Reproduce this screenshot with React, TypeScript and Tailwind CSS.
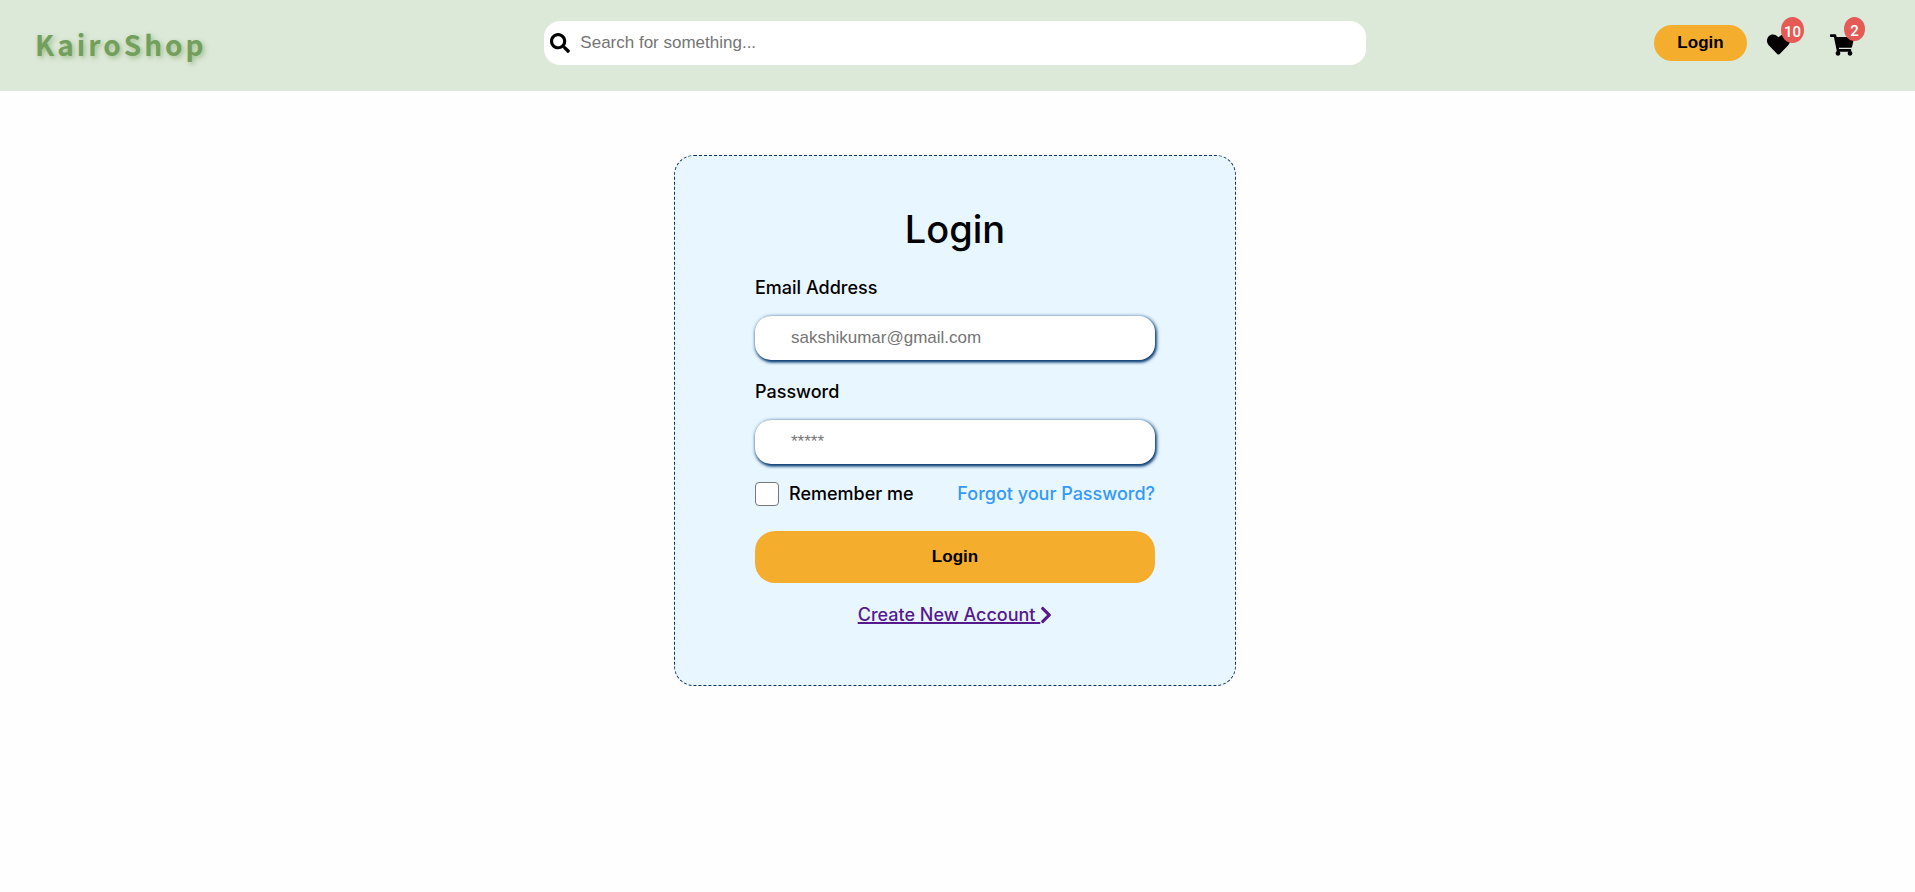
import { FaChevronRight, FaHeart, FaSearch, FaShoppingCart } from "react-icons/fa";

type FieldProps = {
  id: string;
  label: string;
  type: string;
  placeholder: string;
};

function Field({ id, label, type, placeholder }: FieldProps) {
  return (
    <div className="flex flex-col gap-3">
      <label htmlFor={id} className="h-8 leading-8">
        {label}
      </label>
      <input
        id={id}
        type={type}
        placeholder={placeholder}
        className="h-11 w-full rounded-2xl bg-white px-9 font-['Liberation_Sans',sans-serif] text-[17px] font-normal shadow-[1px_1px_4px_#0f4178,1px_2px_3px_#0f4178] outline-none placeholder:text-[#757575]"
      />
    </div>
  );
}

function Header() {
  return (
    <header className="grid h-[91px] grid-cols-[1fr_43%_1fr] items-start bg-[#dce8d8] pr-[5px]">
      <a
        href="#"
        className="mt-[19px] ml-[35px] justify-self-start font-['Noto_Sans_CJK_JP',sans-serif] text-[28px] leading-[50px] font-bold tracking-[3px] text-[#729f5b] [text-shadow:2px_2px_5px_#9dbd8b]"
      >
        KairoShop
      </a>
      <div className="mt-[21px] flex h-11 items-center gap-2.5 rounded-2xl bg-white pl-1.5">
        <FaSearch size={20} aria-hidden="true" />
        <input
          type="search"
          aria-label="Search"
          placeholder="Search for something..."
          className="h-full min-w-0 flex-1 rounded-r-2xl font-['Liberation_Sans',sans-serif] text-[17px] font-normal outline-none placeholder:text-[#757575]"
        />
      </div>
      <div className="mt-[25px] mr-14 flex items-start gap-5 justify-self-end">
        <button className="h-9 w-[93px] rounded-[18px] bg-[#f5ad2d] font-['Liberation_Sans',sans-serif] text-[17px] font-bold">
          Login
        </button>
        <a href="#" aria-label="Wishlist" className="relative mt-2 mr-5">
          <FaHeart size={23} />
          <span className="absolute -top-4 left-3.5 flex h-[26px] w-[23px] items-center justify-center rounded-[50%] bg-[#e65a55] pt-1 font-['Roboto',sans-serif] text-[15px] text-white">
            10
          </span>
        </a>
        <a href="#" aria-label="Cart" className="relative mt-2">
          <FaShoppingCart size={24} />
          <span className="absolute -top-4 left-3.5 flex h-6 w-[21px] items-center justify-center rounded-[50%] bg-[#e65a55] pt-1 font-['Roboto',sans-serif] text-[15px] text-white">
            2
          </span>
        </a>
      </div>
    </header>
  );
}

export default function App() {
  return (
    <div className="min-h-screen bg-[#fefefe] font-['Inter',sans-serif] font-medium text-black">
      <Header />
      <main className="flex justify-center pt-16 pr-[5px] pb-16">
        <form
          className="flex w-[562px] flex-col rounded-[20px] border border-dashed border-[#0f3468] bg-[#e8f6ff] px-20 pt-12 pb-[54px] text-lg"
          onSubmit={(event) => event.preventDefault()}
        >
          <h1 className="text-center text-[38px] leading-[50px]">Login</h1>
          <div className="mt-[18px] flex flex-col gap-4">
            <Field id="email" label="Email Address" type="email" placeholder="sakshikumar@gmail.com" />
            <Field id="password" label="Password" type="password" placeholder="*****" />
          </div>
          <div className="mt-3.5 flex h-8 items-center justify-between">
            <label className="flex items-center gap-2.5">
              <input
                type="checkbox"
                className="size-6 appearance-none rounded-sm border border-[#767676] bg-white"
              />
              Remember me
            </label>
            <a href="#" className="text-[#3399fa]">
              Forgot your Password?
            </a>
          </div>
          <button
            type="submit"
            className="mt-[21px] h-[52px] rounded-[20px] bg-[#f5ad2d] font-['Liberation_Sans',sans-serif] text-[17px] font-bold"
          >
            Login
          </button>
          <a
            href="#"
            className="mt-4 flex h-8 items-center justify-center text-[#551a8b]"
          >
            <span className="whitespace-pre underline decoration-2">{"Create New Account "}</span>
            <FaChevronRight className="h-5 w-3" aria-hidden="true" />
          </a>
        </form>
      </main>
    </div>
  );
}
